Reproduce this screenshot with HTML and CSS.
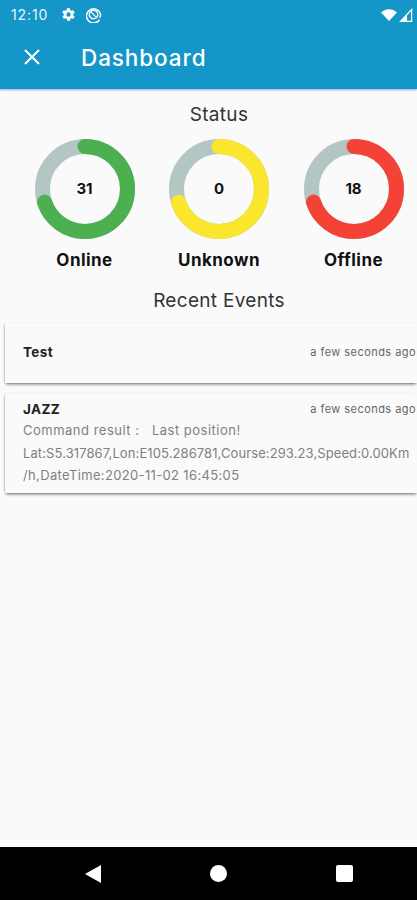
FILE: index.html
```html
<!DOCTYPE html>
<html lang="en">
<head>
    <meta charset="UTF-8">
    <link rel="stylesheet" href="styles.css">
    <title>Dashboard</title>
</head>
<body>
<div class="screen">
    <div class="header">
        <div class="statusBar">
            <span class="clock">12:10</span>
            <svg class="statusIcon" viewBox="0 0 24 24" width="15" height="15"><path fill="#fff" d="M19.4 13c.1-.3.1-.7.1-1s0-.7-.1-1l2.100-1.600c.2-.2.2-.4.1-.6l-2-3.500c-.1-.2-.4-.3-.6-.2l-2.500 1c-.5-.4-1.100-.7-1.700-1l-.4-2.600c0-.3-.2-.5-.5-.5h-4c-.3 0-.5.2-.5.500l-.4 2.600c-.6.300-1.200.6-1.700 1l-2.500-1c-.2-.1-.5 0-.6.2l-2 3.500c-.1.2-.1.4.1.6L4.600 11c-.1.3-.1.700-.1 1s0 .7.1 1l-2.100 1.600c-.2.2-.2.4-.1.6l2 3.500c.1.2.4.3.6.2l2.500-1c.5.4 1.100.7 1.700 1l.4 2.600c0 .3.2.5.5.5h4c.3 0 .5-.2.5-.5l.4-2.600c.6-.3 1.200-.6 1.700-1l2.500 1c.2.1.5 0 .6-.2l2-3.500c.1-.2.1-.4-.1-.6zM12 15.500a3.500 3.500 0 1 1 0-7 3.500 3.500 0 0 1 0 7z"/></svg>
            <svg class="statusIcon" viewBox="0 0 18 18" width="17" height="17"><g fill="none" stroke="#fff"><path stroke-width="1.500" d="M15.500 14.500A7.500 7.500 0 1 1 16.500 9c0 1.500-.5 2.500-1 3.500"/><circle stroke-width="1.500" cx="9" cy="9" r="4.500"/><path stroke-width="1.300" d="M6 6l6 6"/></g></svg>
            <span class="statusSpacer"></span>
            <svg viewBox="0 0 16 12" width="16" height="12"><path fill="#fff" d="M0 3.500C4.500-1 11.500-1 16 3.500L8 12z"/></svg>
            <svg class="signal" viewBox="0 0 14 14" width="14" height="14"><path fill="none" stroke="#fff" stroke-width="1.300" d="M12.600 1.600v11.700H1.600z"/><path fill="#fff" d="M8 13.500V6.500l-6.500 7z"/></svg>
        </div>
        <div class="toolbar">
            <svg viewBox="0 0 16 16" width="16" height="16"><path fill="none" stroke="#fff" stroke-width="2" d="M1 1l14 14M15 1L1 15"/></svg>
            <span class="title">Dashboard</span>
        </div>
    </div>

    <div class="content">
        <div class="sectionTitle">Status</div>
        <div class="statusRow">
            <div class="statusItem">
                <div class="donut">
                    <svg viewBox="0 0 100 100" width="100" height="100">
                        <circle class="donutTrack" cx="50" cy="50" r="42.5"/>
                        <circle class="donutValue green" cx="50" cy="50" r="42.5" pathLength="100" stroke-dasharray="70 100" transform="rotate(-90 50 50)"/>
                    </svg>
                    <span class="donutNumber">31</span>
                </div>
                <div class="statusLabel">Online</div>
            </div>
            <div class="statusItem">
                <div class="donut">
                    <svg viewBox="0 0 100 100" width="100" height="100">
                        <circle class="donutTrack" cx="50" cy="50" r="42.5"/>
                        <circle class="donutValue yellow" cx="50" cy="50" r="42.5" pathLength="100" stroke-dasharray="70 100" transform="rotate(-90 50 50)"/>
                    </svg>
                    <span class="donutNumber">0</span>
                </div>
                <div class="statusLabel">Unknown</div>
            </div>
            <div class="statusItem">
                <div class="donut">
                    <svg viewBox="0 0 100 100" width="100" height="100">
                        <circle class="donutTrack" cx="50" cy="50" r="42.5"/>
                        <circle class="donutValue red" cx="50" cy="50" r="42.5" pathLength="100" stroke-dasharray="70 100" transform="rotate(-90 50 50)"/>
                    </svg>
                    <span class="donutNumber">18</span>
                </div>
                <div class="statusLabel">Offline</div>
            </div>
        </div>
        <div class="sectionTitle recent">Recent Events</div>

        <div class="eventCard short">
            <div class="eventTop">
                <span class="eventName">Test</span>
                <span class="eventTime">a few seconds ago</span>
            </div>
        </div>
        <div class="eventCard">
            <div class="eventTop">
                <span class="eventName">JAZZ</span>
                <span class="eventTime">a few seconds ago</span>
            </div>
            <div class="eventText">
                <div class="lineOne">Command result :&nbsp;&nbsp; Last position!</div>
                <div class="lineTwo">Lat:S5.317867,Lon:E105.286781,Course:293.23,Speed:0.00Km</div>
                <div class="lineThree">/h,DateTime:2020-11-02 16:45:05</div>
            </div>
        </div>
    </div>

    <div class="navBar">
        <svg viewBox="0 0 16 18" width="16" height="18"><path fill="#fff" d="M0 9L16 0v18z"/></svg>
        <span class="navCircle"></span>
        <span class="navSquare"></span>
    </div>
</div>
</body>
</html>
```

FILE: styles.css
```css
html, body {
    margin: 0;
    padding: 0;
}

body {
    font-family: "Inter", "Open Sans", sans-serif;
    background-color: #fafafa;
}

.screen {
    width: 417px;
    height: 900px;
    display: flex;
    flex-direction: column;
    overflow: hidden;
}

.header {
    height: 89px;
    background-color: #1596c8;
    box-shadow: 0 1px 2px rgba(60, 80, 200, 0.5);
    color: white;
    flex-shrink: 0;
}

.statusBar {
    height: 29px;
    display: flex;
    align-items: center;
    padding: 0 4px 0 11px;
}

.clock {
    font-size: 14px;
    letter-spacing: 0.9px;
    margin-right: 13px;
    opacity: 0.9;
}

.statusIcon {
    margin-right: 9px;
}

.statusSpacer {
    flex: 1;
}

.signal {
    margin-left: 2px;
}

.toolbar {
    height: 56px;
    display: flex;
    align-items: center;
    padding-left: 24px;
}

.title {
    font-size: 22.5px;
    font-weight: 500;
    letter-spacing: 0.9px;
    margin-left: 41px;
}

.content {
    flex: 1;
    padding-top: 14px;
}

.sectionTitle {
    padding-left: 21px;
    text-align: center;
    font-size: 19px;
    letter-spacing: 0.3px;
    line-height: 24px;
    color: #333;
}

.recent {
    margin-top: 18px;
}

.statusRow {
    display: flex;
    justify-content: center;
    gap: 34.5px;
    margin-top: 12px;
    padding-left: 21px;
}

.statusItem {
    width: 100px;
    display: flex;
    flex-direction: column;
    align-items: center;
}

.donut {
    position: relative;
    width: 100px;
    height: 100px;
}

.donut svg {
    display: block;
}

.donutTrack {
    fill: none;
    stroke: #b4c6c4;
    stroke-width: 15;
}

.donutValue {
    fill: none;
    stroke-width: 15;
    stroke-linecap: round;
}

.green {
    stroke: #4caf50;
}

.yellow {
    stroke: #fbe62e;
}

.red {
    stroke: #f44336;
}

.donutNumber {
    position: absolute;
    top: 0;
    left: 0;
    right: 0;
    line-height: 100px;
    text-align: center;
    font-size: 15px;
    font-weight: 700;
    color: #111;
}

.statusLabel {
    margin-top: 10px;
    font-size: 17px;
    letter-spacing: 0.45px;
    line-height: 22px;
    font-weight: 700;
    color: #111;
    white-space: nowrap;
}

.eventCard {
    margin: 0 0 10px 5px;
    padding: 6px 1px 6px 18px;
    background-color: #fafafa;
    box-shadow: 0 2px 3px -1px rgba(0, 0, 0, 0.6), -1px 0 2px -1px rgba(0, 0, 0, 0.3);
}

.short {
    height: 41px;
    padding-top: 19px;
    padding-bottom: 0;
    margin-top: 10px;
}

.eventTop {
    display: flex;
    justify-content: space-between;
    align-items: center;
    height: 20px;
}

.eventName {
    font-size: 13.5px;
    letter-spacing: 0.4px;
    font-weight: 700;
    color: #222;
}

.eventTime {
    font-size: 11px;
    letter-spacing: 0.45px;
    color: #666;
}

.eventText {
    font-size: 13px;
    line-height: 22.5px;
    color: #808080;
    white-space: nowrap;
}

.lineOne {
    letter-spacing: 0.5px;
}

.lineTwo {
    letter-spacing: 0.1px;
}

.lineThree {
    letter-spacing: 0.35px;
}

.navBar {
    height: 53px;
    flex-shrink: 0;
    background-color: black;
    display: flex;
    align-items: center;
    justify-content: center;
    gap: 109px;
    padding-left: 21px;
}

.navCircle {
    width: 17px;
    height: 17px;
    border-radius: 50%;
    background-color: white;
}

.navSquare {
    width: 17px;
    height: 17px;
    border-radius: 2px;
    background-color: white;
}
```
